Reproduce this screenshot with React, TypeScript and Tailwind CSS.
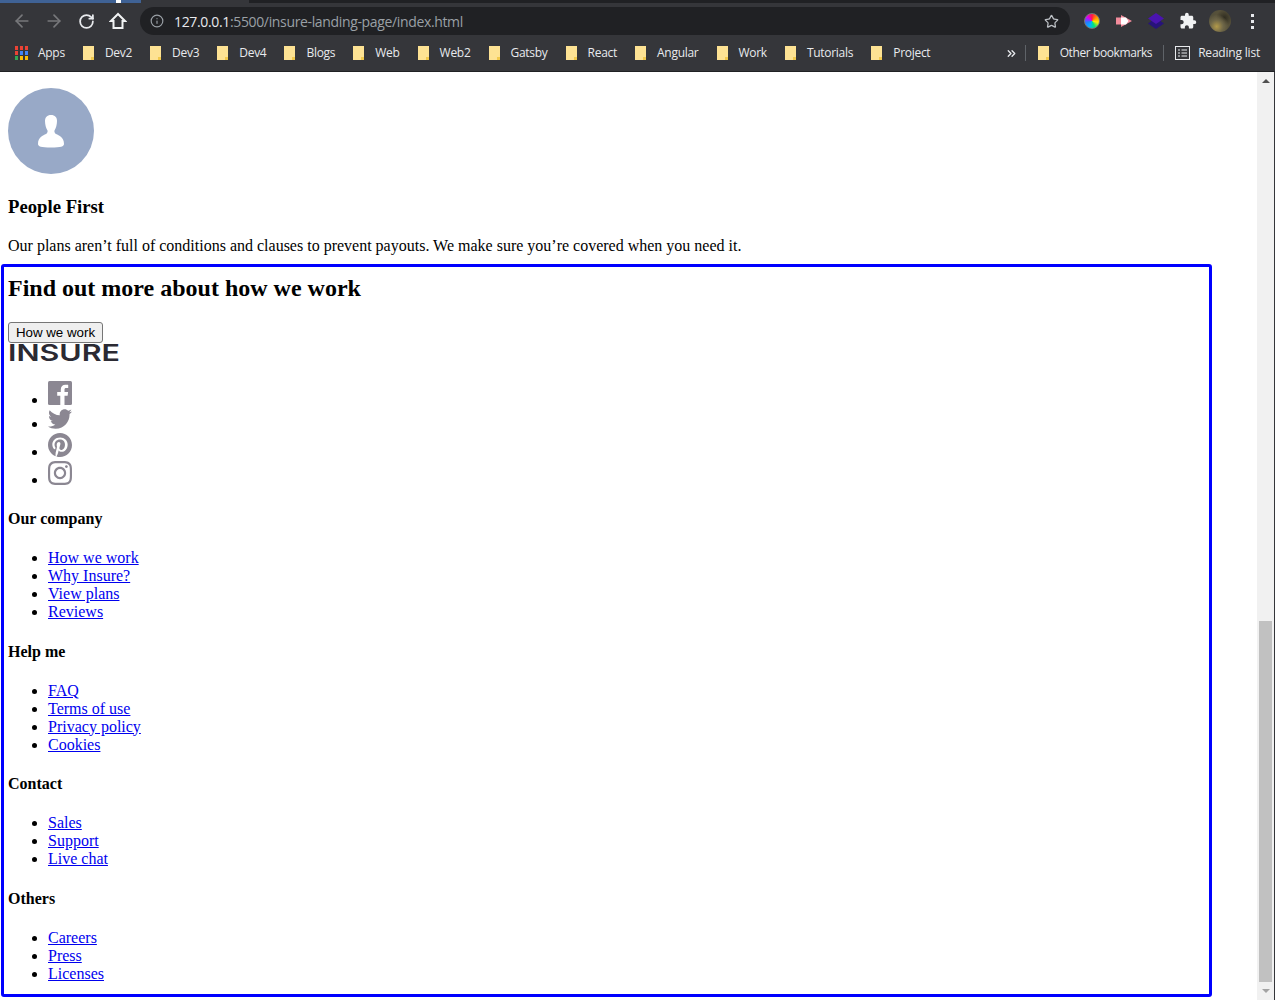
import { ArrowLeft, ArrowRight, RotateCw, Info, Star, ChevronsRight } from 'lucide-react'
import { FaTwitter, FaPinterest, FaInstagram } from 'react-icons/fa'
import { MdExtension } from 'react-icons/md'

const bookmarks = ['Dev2', 'Dev3', 'Dev4', 'Blogs', 'Web', 'Web2', 'Gatsby', 'React', 'Angular', 'Work', 'Tutorials', 'Project']

const footerLinks = [
  { title: 'Our company', links: ['How we work', 'Why Insure?', 'View plans', 'Reviews'] },
  { title: 'Help me', links: ['FAQ', 'Terms of use', 'Privacy policy', 'Cookies'] },
  { title: 'Contact', links: ['Sales', 'Support', 'Live chat'] },
  { title: 'Others', links: ['Careers', 'Press', 'Licenses'] },
]

function Folder() {
  return (
    <svg width="11" height="14" viewBox="0 0 11 14" className="shrink-0">
      <path d="M0 0h11v14H0z" fill="#fde293" />
      <path d="M8 14v-3h3v3z" fill="#f2c94c" />
    </svg>
  )
}

function AppsGrid() {
  const colors = ['#ea4335', '#ea4335', '#ea4335', '#ea4335', '#4285f4', '#4285f4', '#34a853', '#fbbc04', '#fbbc04']
  return (
    <div className="grid grid-cols-[3px_3px_3px] grid-rows-[4px_4px_4px] gap-x-[2px] gap-y-px w-[13px] h-[14px] shrink-0">
      {colors.map((c, i) => (
        <span key={i} style={{ background: c }} />
      ))}
    </div>
  )
}

function Toolbar() {
  return (
    <div className="h-[72px] bg-[#35363a] text-[#e8eaed] font-['Open_Sans','Noto_Sans',sans-serif] shrink-0 flex flex-col">
      <div className="h-[3px] bg-[#202124] flex">
        <div className="w-[116px] bg-[#3f6295]" />
        <div className="w-[5px] bg-white" />
        <div className="w-[20px] bg-[#3f6295]" />
        <div className="w-[108px] bg-[#35363a]" />
      </div>
      <div className="h-[36px] flex items-center">
        <div className="flex items-center pl-[6px]">
          <div className="w-[32px] flex justify-center"><ArrowLeft size={20} className="text-[#77787b]" /></div>
          <div className="w-[32px] flex justify-center"><ArrowRight size={20} className="text-[#77787b]" /></div>
          <div className="w-[32px] flex justify-center"><RotateCw size={17} strokeWidth={2.5} className="text-[#e8eaed]" /></div>
          <div className="w-[32px] flex justify-center">
            <svg width="18" height="18" viewBox="0 0 18 18" fill="none" stroke="#f1f3f4" strokeWidth="2">
              <path d="M9 2L2 9h2.500v7h9V9H16z" />
            </svg>
          </div>
        </div>
        <div className="ml-[6px] w-[930px] h-[28px] rounded-full bg-[#202124] flex items-center pl-[10px] pr-[11px]">
          <Info size={14} className="text-[#9aa0a6]" />
          <span className="ml-[10px] text-[14px] tracking-[-0.35px] text-[#e8eaed]">127.0.0.1</span>
          <span className="text-[14px] tracking-[-0.35px] text-[#9aa0a6]">:5500/insure-landing-page/index.html</span>
          <Star size={15} className="ml-auto text-[#bdc1c6]" />
        </div>
        <div className="flex items-center ml-[6px]">
          <div className="w-[32px] flex justify-center">
            <span className="w-[16px] h-[16px] rounded-full border border-[#77787b] bg-[conic-gradient(#ff1744,#ff9100,#ffea00,#00e676,#00b0ff,#2979ff,#d500f9,#ff1744)]" />
          </div>
          <div className="w-[32px] flex justify-center">
            <svg width="16" height="12" viewBox="0 0 16 12">
              <path d="M0 2.500h5V0l11 6-11 6V9.500H0z" fill="#f28b9b" />
              <path d="M5 2.500h5l2.500 3.500L10 9.500H5z" fill="#fff" />
            </svg>
          </div>
          <div className="w-[32px] flex justify-center">
            <svg width="16" height="16" viewBox="0 0 16 16">
              <path d="M8 5l8 5.500L8 16l-8-5.500z" fill="#27137a" />
              <path d="M8 0l8 5.500L8 11 0 5.500z" fill="#4a14b0" />
            </svg>
          </div>
          <div className="w-[32px] flex justify-center"><MdExtension size={18} className="text-[#f1f3f4]" /></div>
          <div className="w-[32px] flex justify-center">
            <span className="w-[22px] h-[22px] rounded-full bg-[radial-gradient(circle_at_35%_75%,#b39a4a_0,#6f6748_30%,transparent_55%),radial-gradient(circle_at_70%_35%,#2f2c20_0,#57513a_40%,#4a4a3a_100%)]" />
          </div>
          <div className="w-[32px] flex flex-col items-center gap-[3px]">
            <span className="w-[3px] h-[3px] bg-[#e8eaed]" />
            <span className="w-[3px] h-[3px] bg-[#e8eaed]" />
            <span className="w-[3px] h-[3px] bg-[#e8eaed]" />
          </div>
        </div>
      </div>
      <div className="h-[28px] flex items-center text-[12px] tracking-[-0.28px] pl-[15px]">
        <AppsGrid />
        <span className="ml-[10px] mr-[18px]">Apps</span>
        <div className="flex items-center gap-[18px]">
          {bookmarks.map(b => (
            <div key={b} className="flex items-center gap-[11px]">
              <Folder />
              <span>{b}</span>
            </div>
          ))}
        </div>
        <div className="ml-auto flex items-center pr-[15px]">
          <ChevronsRight size={13} strokeWidth={2.5} className="text-[#e8eaed]" />
          <span className="w-px h-[16px] bg-[#5f6368] ml-[7px] mr-[12px]" />
          <Folder />
          <span className="ml-[11px] mr-[1px] tracking-[-0.4px]">Other bookmarks</span>
          <span className="w-px h-[16px] bg-[#5f6368] mx-[10px]" />
          <svg width="15" height="14" viewBox="0 0 15 14" fill="none" stroke="#e8eaed" className="ml-[1px]">
            <rect x="0.500" y="0.500" width="14" height="13" />
            <path d="M3 4h2M3 7h2M3 10h2M6.500 4h5.500M6.500 7h5.500M6.500 10h5.500" />
          </svg>
          <span className="ml-[8px] tracking-[-0.2px]">Reading list</span>
        </div>
      </div>
      <div className="flex-1" />
      <div className="h-px bg-[#202124]" />
    </div>
  )
}

function Scrollbar() {
  return (
    <div className="w-[18px] shrink-0 bg-[#f1f1f1] border-r border-r-[#35363a] flex flex-col items-center">
      <div className="h-[17px] flex items-center justify-center">
        <span className="w-0 h-0 border-x-[4px] border-x-transparent border-b-[4px] border-b-[#505050]" />
      </div>
      <div className="w-[13px] h-[361px] bg-[#c1c1c1] mt-[532px]" />
      <div className="h-[17px] flex items-center justify-center">
        <span className="w-0 h-0 border-x-[4px] border-x-transparent border-t-[4px] border-t-[#a3a3a3]" />
      </div>
    </div>
  )
}

export default function App() {
  return (
    <div className="w-[1275px] h-[1000px] overflow-hidden flex flex-col bg-white">
      <Toolbar />
      <div className="flex-1 flex min-h-0">
        <div className="flex-1 min-w-0 font-['Liberation_Serif',serif] text-[16px] leading-[18px] text-black">
          <div className="px-2 pt-[16px]">
            <div className="w-[86px] h-[86px] rounded-full bg-[#98a9c7] flex items-center justify-center">
              <svg width="26" height="33" viewBox="0 0 26 33" fill="#fff">
                <path d="M13 0c-4 0-6 2.500-6 6 0 3.500 1 7 2.500 9.500.5 1-.5 3-1.500 3.500-3 1.500-8 3-8 10 0 2.500 3 3.500 13 3.500s13-1 13-3.500c0-7-5-8.500-8-10-1-.5-2-2.500-1.500-3.500C18 13 19 9.500 19 6c0-3.500-2-6-6-6z" />
              </svg>
            </div>
            <h3 className="text-[18.720px] leading-[21px] font-bold mt-[22px]">People First</h3>
            <p className="mt-[20px]">Our plans aren’t full of conditions and clauses to prevent payouts. We make sure you’re covered when you need it.</p>
          </div>
          <div className="ml-[1px] mt-[9px] w-[1211px] h-[733px] border-[3px] border-[#0000ff] rounded-[3px] px-[4px] box-border">
            <h2 className="text-[24px] leading-[27px] font-bold mt-[8px]">Find out more about how we work</h2>
            <button className="mt-[20px] block h-[21px] w-[95px] border border-[#767676] rounded-[3px] bg-[#efefef] font-['Liberation_Sans',sans-serif] text-[13.330px] leading-[15px] text-black">
              How we work
            </button>
            <svg width="112" height="28" viewBox="0 0 112 28" className="block -my-[5px]">
              <text x="0" y="23" fontFamily="Inter, sans-serif" fontSize="23" fontWeight="600" fill="#2b2a33" textLength="112" lengthAdjust="spacingAndGlyphs">
                INSURE
              </text>
            </svg>
            <ul className="list-disc pl-10 mt-[20px] mb-[-0.560px]">
              <li>
                <svg viewBox="0 0 24 24" className="inline-block align-baseline w-[24px] h-[24px]">
                  <rect width="24" height="24" rx="1.500" fill="#8b8792" />
                  <path d="M16.500 24v-9.300h3.100l.5-3.600h-3.600V8.800c0-1 .3-1.700 1.800-1.700h1.900V3.900c-.3 0-1.500-.1-2.800-.1-2.800 0-4.600 1.700-4.600 4.800v2.500H9.200v3.600h3.100V24z" fill="#fff" />
                </svg>
              </li>
              <li><FaTwitter viewBox="0 48 512 416" className="inline-block align-baseline w-[24px] h-[20px] text-[#8b8792]" /></li>
              <li><FaPinterest viewBox="0 8 496 496" className="inline-block align-baseline w-[24px] h-[24px] text-[#8b8792]" /></li>
              <li><FaInstagram viewBox="0 32 448 448" className="inline-block align-baseline w-[24px] h-[24px] text-[#8b8792]" /></li>
            </ul>
            {footerLinks.map(group => (
              <div key={group.title} className="pt-[21.560px]">
                <h4 className="font-bold">{group.title}</h4>
                <ul className="list-disc pl-10 mt-[21px]">
                  {group.links.map(link => (
                    <li key={link}>
                      <a className="text-[#0000ee] underline">{link}</a>
                    </li>
                  ))}
                </ul>
              </div>
            ))}
          </div>
        </div>
        <Scrollbar />
      </div>
    </div>
  )
}
